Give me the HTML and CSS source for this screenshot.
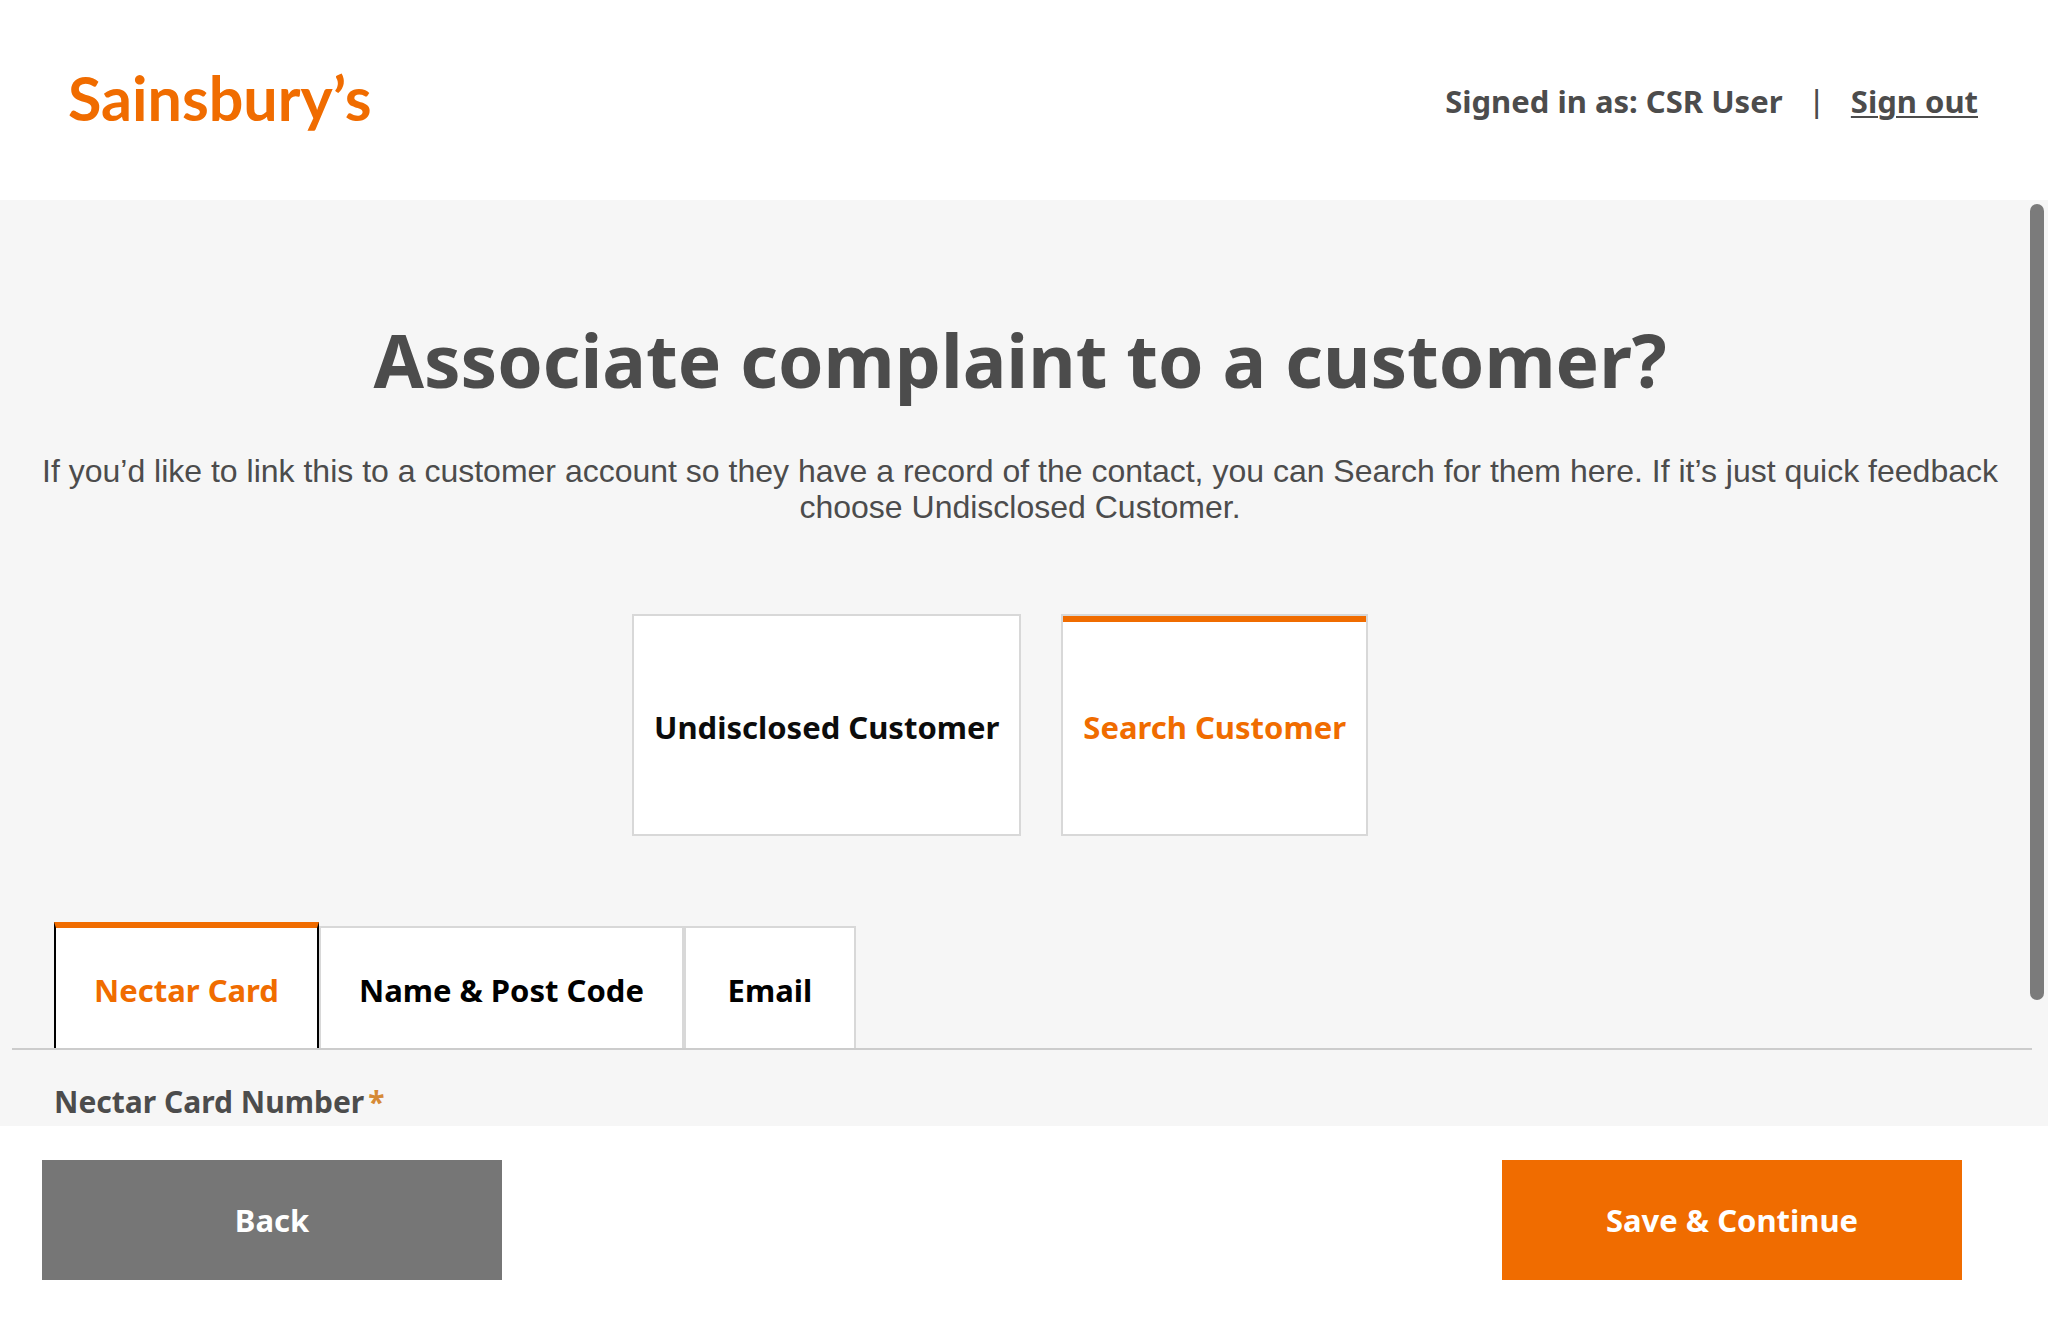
FILE: index.html
```html
<!DOCTYPE html>
<html lang="en">
<head>
<meta charset="utf-8">
<meta name="viewport" content="width=device-width, initial-scale=1">
<title>Sainsbury’s</title>
<link rel="stylesheet" href="styles.css">
</head>
<body>
<header class="header">
  <a class="logo" href="#">Sainsbury’s</a>
  <div class="session">
    <span>Signed in as: CSR User</span>
    <span class="divider">|</span>
    <a class="sign-out" href="#">Sign out</a>
  </div>
</header>
<div class="viewport">
  <main class="content">
    <h1 class="title">Associate complaint to a customer?</h1>
    <p class="intro">If you’d like to link this to a customer account so they have a record of the contact, you can Search for them here. If it’s just quick feedback choose Undisclosed Customer.</p>
    <div class="choices">
      <button class="choice" type="button">Undisclosed Customer</button>
      <button class="choice choice-active" type="button">Search Customer</button>
    </div>
    <div class="tabs" role="tablist">
      <button class="tab tab-active" type="button" role="tab" aria-selected="true">Nectar Card</button>
      <button class="tab" type="button" role="tab" aria-selected="false">Name &amp; Post Code</button>
      <button class="tab" type="button" role="tab" aria-selected="false">Email</button>
    </div>
    <div class="field">
      <label class="label" for="nectar">Nectar Card Number<span class="required">*</span></label>
      <input class="input" id="nectar" type="text" required>
    </div>
  </main>
  <div class="thumb"></div>
</div>
<footer class="footer">
  <button class="action action-back" type="button">Back</button>
  <button class="action action-save" type="button">Save &amp; Continue</button>
</footer>
</body>
</html>
```
FILE: styles.css
```css
* { box-sizing: border-box; }

body {
  display: flex;
  flex-direction: column;
  height: 100vh;
  margin: 0;
  background: #fff;
  color: #4c4c4c;
  font: 700 31px/40px "Noto Sans", sans-serif;
}

button { font: inherit; cursor: pointer; }

.header {
  display: flex;
  flex: none;
  align-items: center;
  justify-content: space-between;
  height: 200px;
  padding: 0 70px 0 68px;
}

.logo {
  padding-bottom: 4px;
  color: #f06c00;
  font-family: Lato, sans-serif;
  font-size: 61px;
  line-height: 72px;
  text-decoration: none;
}

.session { display: flex; gap: 30px; padding-top: 2px; }
.divider { font: 400 32px/40px "Liberation Sans", sans-serif; }
.sign-out { color: inherit; text-underline-offset: 3px; text-decoration-thickness: 2px; }

.viewport {
  position: relative;
  flex: 1;
  min-height: 0;
  overflow: hidden;
  background: #f6f6f6;
}

.content { padding: 112px 20px 40px 12px; }

.title {
  margin: 0;
  font-size: 73px;
  line-height: 96px;
  text-align: center;
}

.intro {
  margin: 45px 20px 89px;
  font: 400 32px/36px "Liberation Sans", sans-serif;
  text-align: center;
}

.choices {
  display: flex;
  justify-content: center;
  gap: 40px;
  margin-right: 40px;
}

.choice {
  height: 222px;
  padding: 4px 20px 0;
  border: 2px solid #d8d8d8;
  background: #fff;
  color: #0c0c0c;
}

.choice-active {
  box-shadow: inset 0 6px #f06c00;
  color: #f06c00;
}

.tabs {
  display: flex;
  align-items: flex-end;
  margin: 86px -4px 0 0;
  padding-left: 42px;
  border-bottom: 2px solid #ccc;
}

.tab {
  min-width: 172px;
  height: 122px;
  padding: 4px 38px 0;
  border: 2px solid #d8d8d8;
  border-bottom: 0;
  background: #fff;
  color: #000;
}

.tab-active {
  height: 126px;
  border-color: #f06c00 #000;
  border-top-width: 6px;
  color: #f06c00;
}

.field {
  display: flex;
  flex-direction: column;
  gap: 12px;
  margin: 32px 42px 0;
}

.label { font-size: 30px; }
.required { margin-left: 4px; color: #d68a36; }

.input {
  height: 80px;
  border: 2px solid #ccc;
  background: #fff;
  font: inherit;
}

.thumb {
  position: absolute;
  top: 4px;
  right: 4px;
  width: 14px;
  height: 86%;
  border-radius: 7px;
  background: #7b7b7b;
}

.footer {
  display: flex;
  flex: none;
  justify-content: space-between;
  padding: 34px 86px 48px 42px;
}

.action {
  width: 460px;
  height: 120px;
  border: 0;
  color: #fff;
}

.action-back { background: #767676; }
.action-save { background: #f06c00; }
```
